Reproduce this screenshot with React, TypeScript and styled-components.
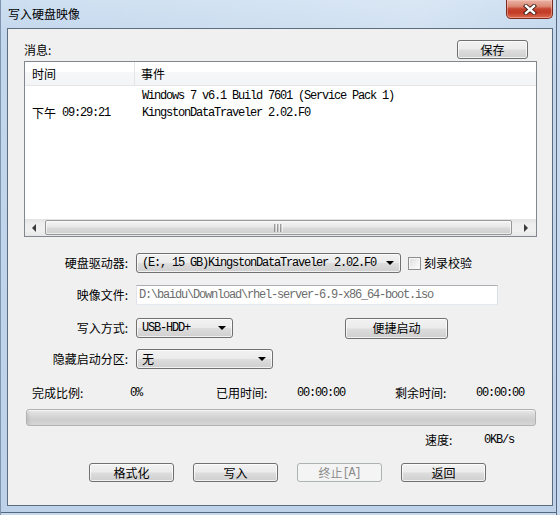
import React from "react";
import styled, { createGlobalStyle } from "styled-components";

const CJK = `"Noto Sans CJK SC", "Microsoft YaHei", sans-serif`;
const MONO = `"Liberation Mono", "Noto Sans CJK SC", monospace`;

const Global = createGlobalStyle`
  html, body { margin: 0; padding: 0; background: #fff; }
  body { width: 560px; height: 515px; overflow: hidden; }
  * { box-sizing: border-box; }
`;

const Frame = styled.div`
  width: 560px;
  height: 515px;
  display: flex;
  flex-direction: column;
  padding: 0 7px 9px 7px;
  background: linear-gradient(180deg, #cddff1 0px, #c2d6ec 40px, #bdd2e9 100%);
  box-shadow: inset 1px 0 0 #7f95ad, inset -3px 0 0 #c6d9ee, inset -4px 0 0 #55687e,
    inset 0 -2px 0 #c6d9ee, inset 0 -3px 0 #55687e;
  font-family: ${CJK};
  font-size: 12px;
  color: #000;
`;

const TitleBar = styled.div`
  height: 28px;
  display: flex;
  align-items: flex-start;
  justify-content: space-between;
  background: linear-gradient(90deg, rgba(255,255,255,0) 0%, rgba(255,255,255,0.18) 55%, rgba(255,255,255,0.25) 75%, rgba(255,255,255,0) 100%);
  margin: 0 -7px;
  padding: 0 8px 0 8px;
`;

const Title = styled.span`
  margin-top: 6px;
  font-size: 12px;
  line-height: 16px;
  color: #000;
`;

const CloseButton = styled.div`
  width: 47px;
  height: 19px;
  margin-right: -1px;
  display: flex;
  align-items: center;
  justify-content: center;
  border: 1px solid #7a2b1f;
  border-top: none;
  border-radius: 0 0 5px 5px;
  background: linear-gradient(180deg, #eab3a6 0%, #dc8a76 35%, #c5432d 50%, #c23c26 70%, #dd6a4f 100%);
  box-shadow: inset 0 0 0 1px rgba(255, 210, 200, 0.45);
`;

const Client = styled.div`
  flex: 1;
  display: flex;
  flex-direction: column;
  border: 1px solid #5c6d80;
  background: #f0f0f0;
`;

const HeaderRow = styled.div`
  margin-top: 11px;
  height: 19px;
  padding: 0 24px 0 16px;
  display: flex;
  align-items: center;
  justify-content: space-between;
`;

const Text = styled.span`
  font-family: ${CJK};
  font-size: 12px;
  line-height: 16px;
  white-space: nowrap;
`;

const Mono = styled.span<{ $muted?: boolean }>`
  font-family: ${MONO};
  font-size: 12px;
  letter-spacing: -1.2px;
  line-height: 16px;
  white-space: pre;
  color: ${(p) => (p.$muted ? "#6d6d6d" : "inherit")};
`;

const Button = styled.div<{ $w: number; $h?: number; $disabled?: boolean }>`
  width: ${(p) => p.$w}px;
  height: ${(p) => p.$h ?? 19}px;
  flex: none;
  display: flex;
  align-items: center;
  justify-content: center;
  border: 1px solid ${(p) => (p.$disabled ? "#adb2b5" : "#707070")};
  border-radius: 3px;
  background: ${(p) =>
    p.$disabled
      ? "#f4f4f4"
      : "linear-gradient(180deg, #f2f2f2 0%, #ebebeb 48%, #dddddd 52%, #cfcfcf 100%)"};
  box-shadow: ${(p) => (p.$disabled ? "none" : "inset 0 0 0 1px rgba(255,255,255,0.7)")};
  color: ${(p) => (p.$disabled ? "#8d8d8d" : "#000")};
  font-family: ${CJK};
  font-size: 12px;
  line-height: 16px;
`;

const ListBox = styled.div`
  margin: 2px 15px 0 16px;
  height: 176px;
  border: 1px solid #828790;
  background: #fff;
  display: flex;
  flex-direction: column;
`;

const ListHead = styled.div`
  height: 24px;
  display: flex;
  border-bottom: 1px solid #e5e5e5;
  background: linear-gradient(180deg, #ffffff 0%, #ffffff 45%, #f6f7f9 45%, #f4f5f7 100%);
`;

const HeadCell = styled.div<{ $w?: number }>`
  ${(p) => (p.$w ? `width: ${p.$w}px;` : "flex: 1;")}
  display: flex;
  align-items: center;
  padding-left: ${(p) => (p.$w ? 7 : 6)}px;
  border-right: ${(p) => (p.$w ? "1px solid #e5e5e5" : "none")};
  font-family: ${CJK};
  font-size: 12px;
`;

const ListBody = styled.div`
  flex: 1;
  padding-top: 1px;
`;

const ListRow = styled.div`
  height: 17px;
  display: flex;
  align-items: center;
`;

const Cell = styled.div<{ $w?: number }>`
  ${(p) => (p.$w ? `width: ${p.$w}px;` : "flex: 1;")}
  padding-left: 7px;
  display: flex;
  align-items: center;
`;

const HScroll = styled.div`
  height: 17px;
  display: flex;
  align-items: stretch;
  background: linear-gradient(180deg, #e3e3e3 0%, #eeeeee 30%, #f0f0f0 70%, #e6e6e6 100%);
`;

const ScrollArrow = styled.div`
  width: 19px;
  display: flex;
  align-items: center;
  justify-content: center;
`;

const Thumb = styled.div`
  flex: 1;
  margin: 1px 5px 1px 1px;
  border: 1px solid #979797;
  border-radius: 2px;
  background: linear-gradient(180deg, #f3f3f3 0%, #e8e8e8 45%, #d9d9d9 55%, #cfcfcf 100%);
  box-shadow: inset 0 0 0 1px rgba(255,255,255,0.6);
  display: flex;
  align-items: center;
  justify-content: center;
`;

const Form = styled.div`
  margin-top: 16px;
  display: flex;
  flex-direction: column;
`;

const FormRow = styled.div<{ $mt?: number }>`
  height: 20px;
  margin-top: ${(p) => p.$mt ?? 0}px;
  display: flex;
  align-items: center;
`;

const Label = styled.div`
  width: 120px;
  margin-right: 8px;
  text-align: right;
  font-family: ${CJK};
  font-size: 12px;
  line-height: 16px;
  white-space: nowrap;
`;

const Select = styled.div<{ $w: number }>`
  width: ${(p) => p.$w}px;
  height: 20px;
  flex: none;
  display: flex;
  align-items: center;
  padding: 0 5px 0 5px;
  border: 1px solid #707070;
  border-radius: 3px;
  background: linear-gradient(180deg, #f2f2f2 0%, #ebebeb 48%, #dddddd 52%, #cfcfcf 100%);
  box-shadow: inset 0 0 0 1px rgba(255,255,255,0.7);
`;

const SelectText = styled.div`
  flex: 1;
  display: flex;
  align-items: center;
  overflow: hidden;
`;

const DownArrow = styled.div`
  width: 0;
  height: 0;
  border-left: 4px solid transparent;
  border-right: 4px solid transparent;
  border-top: 4px solid #000;
  margin-right: 1px;
`;

const Input = styled.div`
  width: 362px;
  height: 20px;
  display: flex;
  align-items: center;
  padding-left: 2px;
  border: 1px solid #abadb3;
  border-left-color: #e2e3ea;
  border-right-color: #dbdfe6;
  border-bottom-color: #e3e9ef;
  background: #fff;
`;

const Check = styled.div`
  width: 13px;
  height: 13px;
  margin-left: 7px;
  border: 1px solid #8e8f8f;
  background: linear-gradient(135deg, #dcdcdc 0%, #f0f0f0 55%, #ffffff 100%);
  box-shadow: inset 0 0 0 1px #f6f6f6;
`;

const CheckLabel = styled(Text)`
  margin-left: 3px;
`;

const Spacer = styled.div<{ $w: number }>`
  width: ${(p) => p.$w}px;
  flex: none;
`;

const StatsRow = styled.div`
  margin-top: 16px;
  height: 16px;
  padding-left: 24px;
  display: grid;
  grid-template-columns: 98px 86px 81px 98px 81px auto;
  align-items: center;
`;

const Progress = styled.div`
  margin: 8px 0 0 18px;
  width: 510px;
  height: 17px;
  border: 1px solid #b2b2b2;
  border-radius: 3px;
  background: linear-gradient(180deg, #e9e9e9 0%, #d8d8d8 35%, #cdcdcd 65%, #d6d6d6 100%);
  box-shadow: inset 0 1px 0 #f4f4f4, inset 4px 0 3px -2px rgba(0,0,0,0.08);
`;

const SpeedRow = styled.div`
  margin-top: 6px;
  height: 16px;
  padding-left: 417px;
  display: grid;
  grid-template-columns: 59px auto;
  align-items: center;
`;

const ButtonRow = styled.div`
  margin-top: 15px;
  padding-left: 81px;
  display: flex;
  gap: 19px;
`;

export default function App() {
  return (
    <>
      <Global />
      <Frame>
        <TitleBar>
          <Title>写入硬盘映像</Title>
          <CloseButton>
            <svg width="14" height="11" viewBox="0 0 14 11">
              <path d="M3 2 L11 9 M11 2 L3 9" stroke="#3b1a14" strokeWidth="4.2" strokeLinecap="square" />
              <path d="M3 2 L11 9 M11 2 L3 9" stroke="#ffffff" strokeWidth="2.4" strokeLinecap="square" />
            </svg>
          </CloseButton>
        </TitleBar>
        <Client>
          <HeaderRow>
            <Text>消息:</Text>
            <Button $w={71}>保存</Button>
          </HeaderRow>
          <ListBox>
            <ListHead>
              <HeadCell $w={110}>时间</HeadCell>
              <HeadCell>事件</HeadCell>
            </ListHead>
            <ListBody>
              <ListRow>
                <Cell $w={110} />
                <Cell>
                  <Mono>Windows 7 v6.1 Build 7601 (Service Pack 1)</Mono>
                </Cell>
              </ListRow>
              <ListRow>
                <Cell $w={110}>
                  <Text>下午</Text>
                  <Mono> 09:29:21</Mono>
                </Cell>
                <Cell>
                  <Mono>KingstonDataTraveler 2.02.F0</Mono>
                </Cell>
              </ListRow>
            </ListBody>
            <HScroll>
              <ScrollArrow>
                <svg width="5" height="8" viewBox="0 0 5 8">
                  <path d="M4 0 L0 4 L4 8 Z" fill="#3a3a3a" />
                </svg>
              </ScrollArrow>
              <Thumb>
                <svg width="9" height="8" viewBox="0 0 9 8">
                  <path d="M1 0V8M4 0V8M7 0V8" stroke="#6a6a6a" strokeWidth="1.2" />
                  <path d="M2 0V8M5 0V8M8 0V8" stroke="#ffffff" strokeWidth="1" />
                </svg>
              </Thumb>
              <ScrollArrow>
                <svg width="5" height="8" viewBox="0 0 5 8">
                  <path d="M0 0 L4 4 L0 8 Z" fill="#3a3a3a" />
                </svg>
              </ScrollArrow>
            </HScroll>
          </ListBox>

          <Form>
            <FormRow>
              <Label>硬盘驱动器:</Label>
              <Select $w={265}>
                <SelectText>
                  <Mono>(E:, 15 GB)KingstonDataTraveler 2.02.F0</Mono>
                </SelectText>
                <DownArrow />
              </Select>
              <Check />
              <CheckLabel>刻录校验</CheckLabel>
            </FormRow>
            <FormRow $mt={12}>
              <Label>映像文件:</Label>
              <Input>
                <Mono $muted>D:\baidu\Download\rhel-server-6.9-x86_64-boot.iso</Mono>
              </Input>
            </FormRow>
            <FormRow $mt={13}>
              <Label>写入方式:</Label>
              <Select $w={97}>
                <SelectText>
                  <Mono>USB-HDD+</Mono>
                </SelectText>
                <DownArrow />
              </Select>
              <Spacer $w={112} />
              <Button $w={103} $h={21}>便捷启动</Button>
            </FormRow>
            <FormRow $mt={11}>
              <Label>隐藏启动分区:</Label>
              <Select $w={137}>
                <SelectText>
                  <Text>无</Text>
                </SelectText>
                <DownArrow />
              </Select>
            </FormRow>
          </Form>

          <StatsRow>
            <Text>完成比例:</Text>
            <Mono>0%</Mono>
            <Text>已用时间:</Text>
            <Mono>00:00:00</Mono>
            <Text>剩余时间:</Text>
            <Mono>00:00:00</Mono>
          </StatsRow>

          <Progress />

          <SpeedRow>
            <Text>速度:</Text>
            <Mono>0KB/s</Mono>
          </SpeedRow>

          <ButtonRow>
            <Button $w={85}>格式化</Button>
            <Button $w={85}>写入</Button>
            <Button $w={85} $disabled>
              终止<Mono>[A]</Mono>
            </Button>
            <Button $w={85}>返回</Button>
          </ButtonRow>
        </Client>
      </Frame>
    </>
  );
}
